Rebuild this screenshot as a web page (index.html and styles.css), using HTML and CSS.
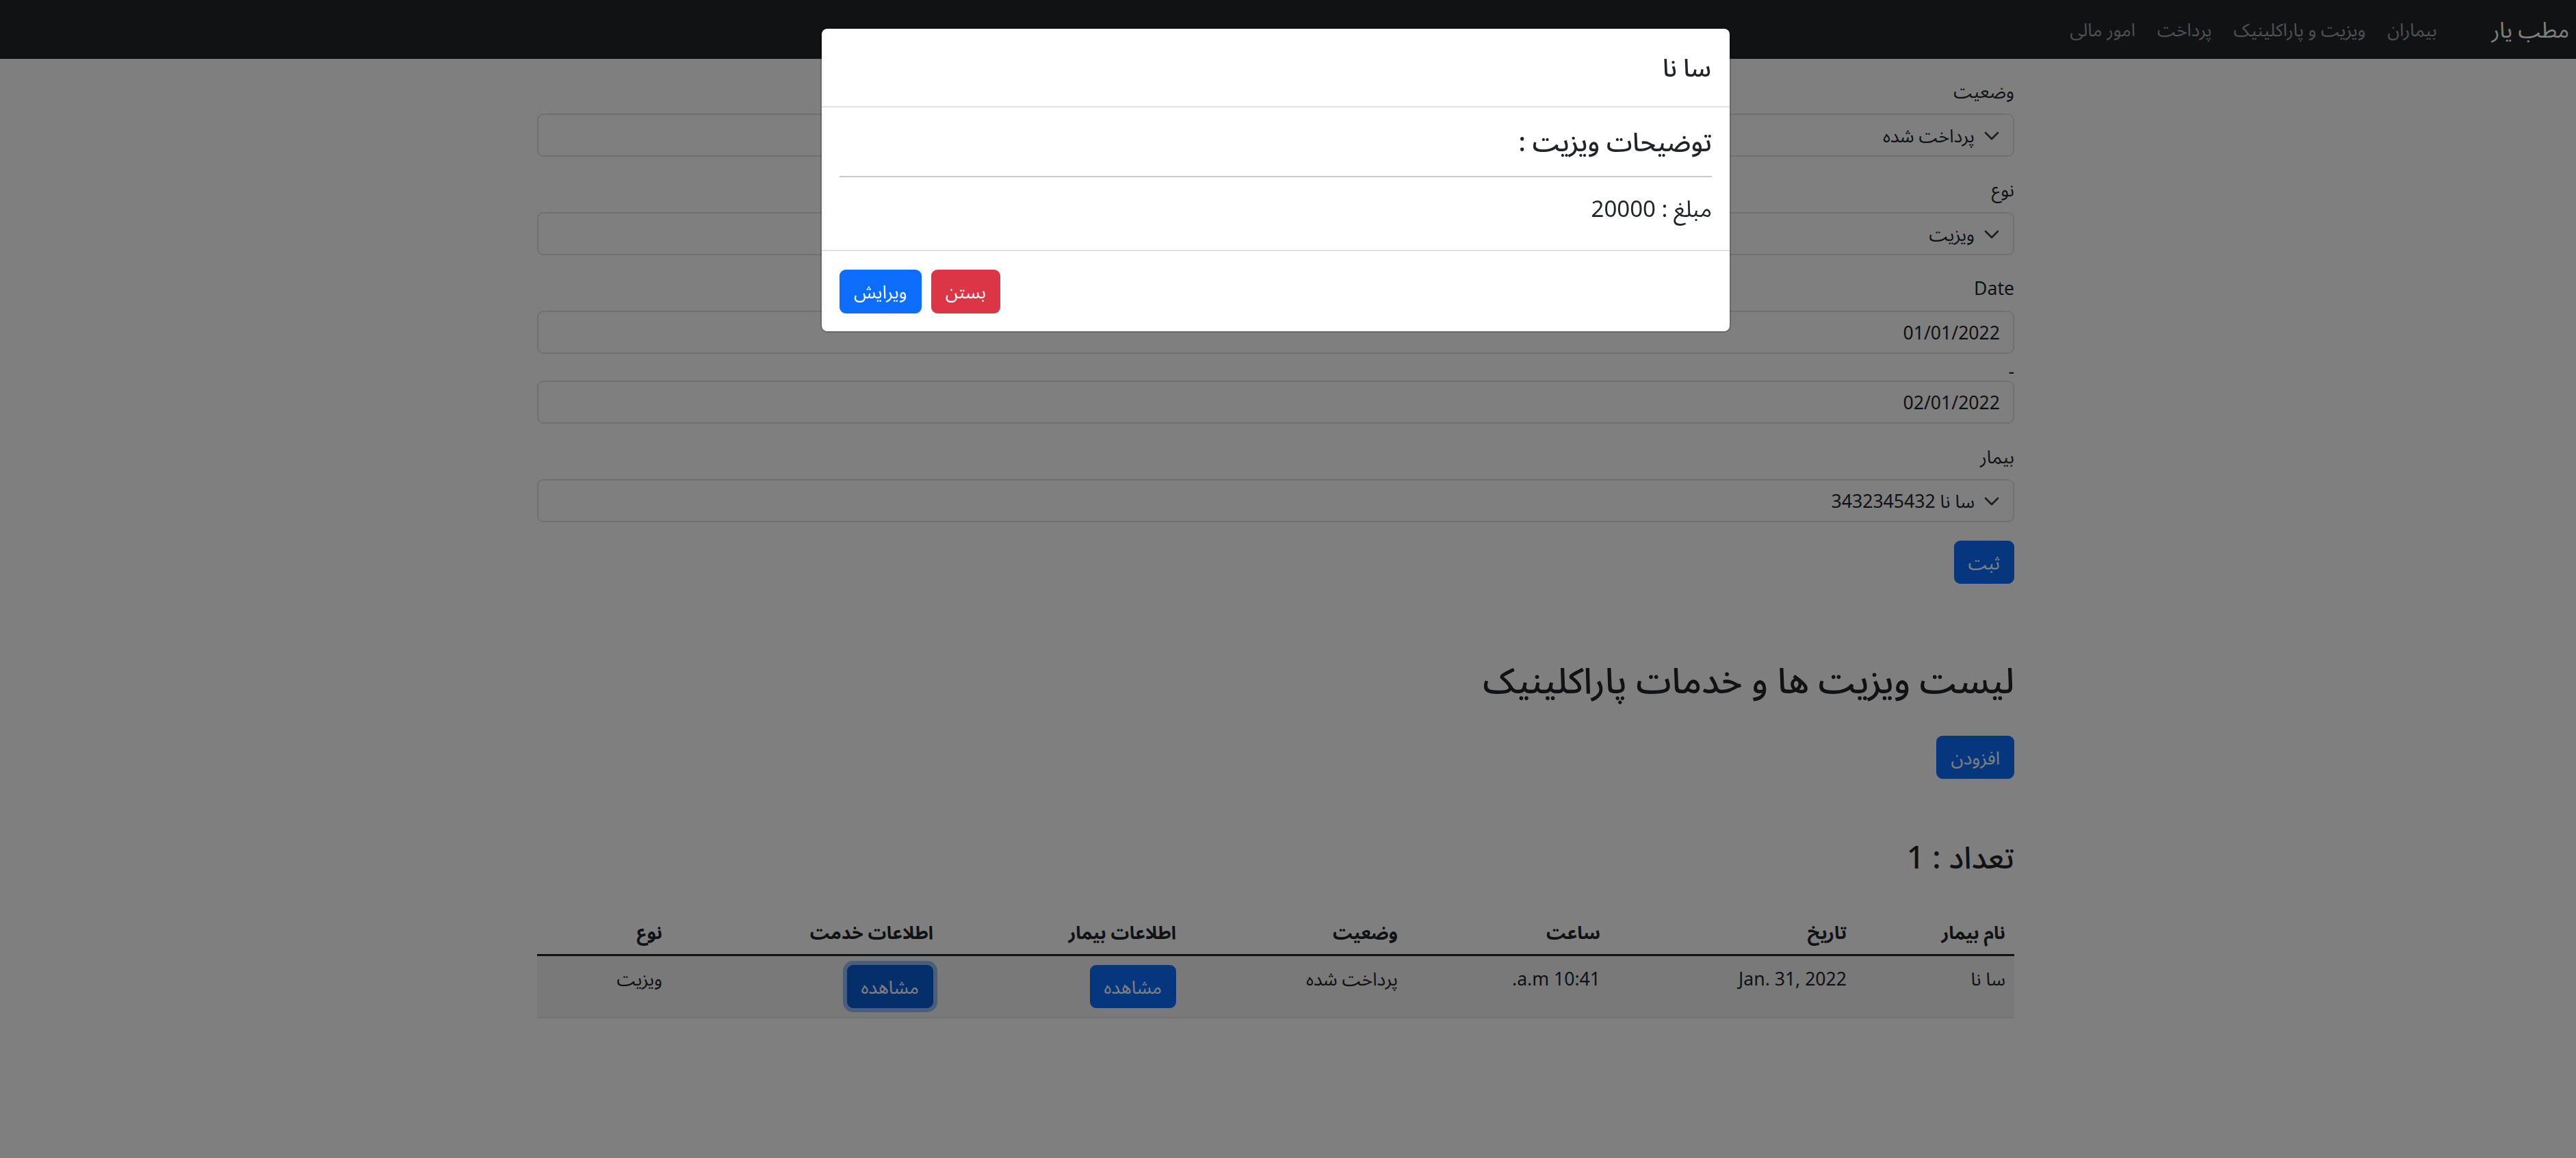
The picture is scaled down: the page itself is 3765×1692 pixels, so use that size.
FILE: index.html
```html
<!DOCTYPE html>
<html lang="fa" dir="rtl">
<head>
<meta charset="utf-8">
<title>مطب یار</title>
<link rel="stylesheet" href="styles.css">
</head>
<body>
<nav class="navbar">
  <a class="brand" href="#">مطب یار</a>
  <ul class="nav-links">
    <li><a href="#">بیماران</a></li>
    <li><a href="#">ویزیت و پاراکلینیک</a></li>
    <li><a href="#">پرداخت</a></li>
    <li><a href="#">امور مالی</a></li>
  </ul>
</nav>

<main class="container">
  <form class="visit-form">
    <div class="group">
      <label class="form-label">وضعیت</label>
      <div class="form-select"><svg class="chev" width="22" height="14" viewBox="0 0 22 14"><path d="M2 3 L11 12 L20 3" fill="none" stroke="#343a40" stroke-width="2.6" stroke-linecap="round" stroke-linejoin="round"/></svg><span>پرداخت شده</span></div>
    </div>
    <div class="group">
      <label class="form-label">نوع</label>
      <div class="form-select"><svg class="chev" width="22" height="14" viewBox="0 0 22 14"><path d="M2 3 L11 12 L20 3" fill="none" stroke="#343a40" stroke-width="2.6" stroke-linecap="round" stroke-linejoin="round"/></svg><span>ویزیت</span></div>
    </div>
    <div class="group">
      <label class="form-label">Date</label>
      <div class="form-control">01/01/2022</div>
      <div class="dash">-</div>
      <div class="form-control">02/01/2022</div>
    </div>
    <div class="group group-last">
      <label class="form-label">بیمار</label>
      <div class="form-select"><svg class="chev" width="22" height="14" viewBox="0 0 22 14"><path d="M2 3 L11 12 L20 3" fill="none" stroke="#343a40" stroke-width="2.6" stroke-linecap="round" stroke-linejoin="round"/></svg><span>سا نا 3432345432</span></div>
    </div>
    <button type="button" class="btn btn-primary">ثبت</button>
  </form>

  <h2 class="list-title">لیست ویزیت ها و خدمات پاراکلینیک</h2>
  <button type="button" class="btn btn-primary">افزودن</button>
  <h3 class="count">تعداد : 1</h3>

  <table class="table">
    <colgroup>
      <col class="c1"><col class="c2"><col class="c3"><col class="c4"><col class="c5"><col class="c6"><col class="c7">
    </colgroup>
    <thead>
      <tr><th>نام بیمار</th><th>تاریخ</th><th>ساعت</th><th>وضعیت</th><th>اطلاعات بیمار</th><th>اطلاعات خدمت</th><th>نوع</th></tr>
    </thead>
    <tbody>
      <tr>
        <td>سا نا</td>
        <td>Jan. 31, 2022</td>
        <td>10:41 a.m.</td>
        <td>پرداخت شده</td>
        <td><button type="button" class="btn btn-primary">مشاهده</button></td>
        <td><button type="button" class="btn btn-primary focused">مشاهده</button></td>
        <td>ویزیت</td>
      </tr>
    </tbody>
  </table>
</main>

<div class="modal-backdrop"></div>
<div class="modal">
  <div class="modal-content">
    <div class="modal-header">
      <h5 class="modal-title">سا نا</h5>
    </div>
    <div class="modal-body">
      <h4 class="desc">توضیحات ویزیت :</h4>
      <hr class="divider">
      <h5 class="amount">مبلغ : 20000</h5>
    </div>
    <div class="modal-footer">
      <button type="button" class="btn btn-danger">بستن</button>
      <button type="button" class="btn btn-primary">ویرایش</button>
    </div>
  </div>
</div>
</body>
</html>
```

FILE: styles.css
```css
* { box-sizing: border-box; }

html, body {
  margin: 0;
  padding: 0;
}

body {
  font-family: "Noto Sans", "Noto Sans Arabic", "DejaVu Sans", sans-serif;
  font-size: 26.6px;
  line-height: 38px;
  color: #212529;
  background: #fff;
  width: 3765px;
  min-height: 1692px;
  direction: rtl;
}

/* navbar */
.navbar {
  height: 86px;
  background: #212529;
  display: flex;
  align-items: center;
  padding: 0 10px 0 0;
}

.brand {
  color: #fff;
  font-size: 32px;
  text-decoration: none;
  margin-left: 64px;
}

.nav-links {
  list-style: none;
  margin: 0;
  padding: 0;
  display: flex;
}

.nav-links a {
  display: block;
  padding: 0 16px;
  font-size: 26px;
  color: rgba(255, 255, 255, 0.58);
  text-decoration: none;
}

/* container */
.container {
  width: 2159px;
  margin-left: 785px;
  margin-right: auto;
  padding-top: 28px;
}

.visit-form {
  margin: 0;
}

.group {
  margin-bottom: 29px;
}

.group-last {
  margin-bottom: 27px;
}

.form-label {
  display: block;
  line-height: 38px;
  margin-bottom: 14px;
}

.form-select,
.form-control {
  height: 63px;
  border: 2px solid #dee2e6;
  border-radius: 9px;
  background: #fff;
  display: flex;
  align-items: center;
}

.form-select {
  padding-right: 20px;
}

.form-select .chev {
  flex: none;
  margin-left: 14px;
}

.form-control {
  padding-right: 19px;
}

.dash {
  height: 39px;
  line-height: 50px;
}

/* buttons */
.btn {
  font-family: inherit;
  font-size: 26.6px;
  line-height: 38px;
  height: 63px;
  padding: 0 19px;
  border: 2px solid transparent;
  border-radius: 9px;
  color: #fff;
  cursor: pointer;
  display: inline-flex;
  align-items: center;
}

.btn-primary {
  background: #0d6efd;
  border-color: #0d6efd;
}

.btn-danger {
  background: #dc3545;
  border-color: #dc3545;
}

.btn.focused {
  background: #0b5ed7;
  border-color: #0a58ca;
  box-shadow: 0 0 0 6px rgba(49, 132, 253, 0.5);
}

/* headings */
.list-title {
  font-size: 52px;
  font-weight: 500;
  line-height: 60px;
  margin: 110px 0 52px;
}

.count {
  font-size: 45px;
  font-weight: 500;
  line-height: 53px;
  margin: 87px 0 52px;
}

/* table */
.table {
  width: 2159px;
  border-collapse: collapse;
  table-layout: fixed;
}

.c1 { width: 232px; }
.c2 { width: 360px; }
.c3 { width: 296px; }
.c4 { width: 324px; }
.c5 { width: 355px; }
.c6 { width: 396px; }
.c7 { width: 196px; }

.table th,
.table td {
  text-align: right;
  vertical-align: top;
  padding: 13px;
  line-height: 38px;
}

.table td {
  padding-top: 14px;
}

.table th {
  font-weight: 700;
}

.table thead tr {
  border-bottom: 3px solid #212529;
}

.table tbody tr {
  background: rgba(0, 0, 0, 0.05);
  border-bottom: 2px solid #dee2e6;
}

.table td .btn {
  margin-top: -1px;
}

/* modal */
.modal-backdrop {
  position: fixed;
  inset: 0;
  background: rgba(0, 0, 0, 0.5);
  z-index: 10;
}

.modal {
  position: fixed;
  top: 40px;
  left: 1199px;
  width: 1331px;
  z-index: 20;
}

.modal-content {
  background: #fff;
  border: 2px solid rgba(0, 0, 0, 0.175);
  border-radius: 10px;
  background-clip: padding-box;
}

.modal-header {
  height: 115px;
  display: flex;
  align-items: center;
  padding: 0 27px;
  border-bottom: 2px solid #dee2e6;
}

.modal-title {
  margin: 0;
  font-size: 36px;
  font-weight: 500;
  line-height: 44px;
}

.modal-body {
  padding: 26px 26px;
}

.desc {
  margin: 0;
  font-size: 38px;
  font-weight: 500;
  line-height: 46px;
}

.divider {
  margin: 28px 0 26px;
  border: 0;
  border-top: 2px solid rgba(33, 37, 41, 0.25);
}

.amount {
  margin: 0 0 14px;
  font-size: 33px;
  font-weight: 400;
  line-height: 40px;
}

.modal-footer {
  display: flex;
  justify-content: flex-end;
  gap: 14px;
  padding: 27px 26px 26px;
  border-top: 2px solid #dee2e6;
}

.modal-footer .btn {
  height: 64px;
}
```
